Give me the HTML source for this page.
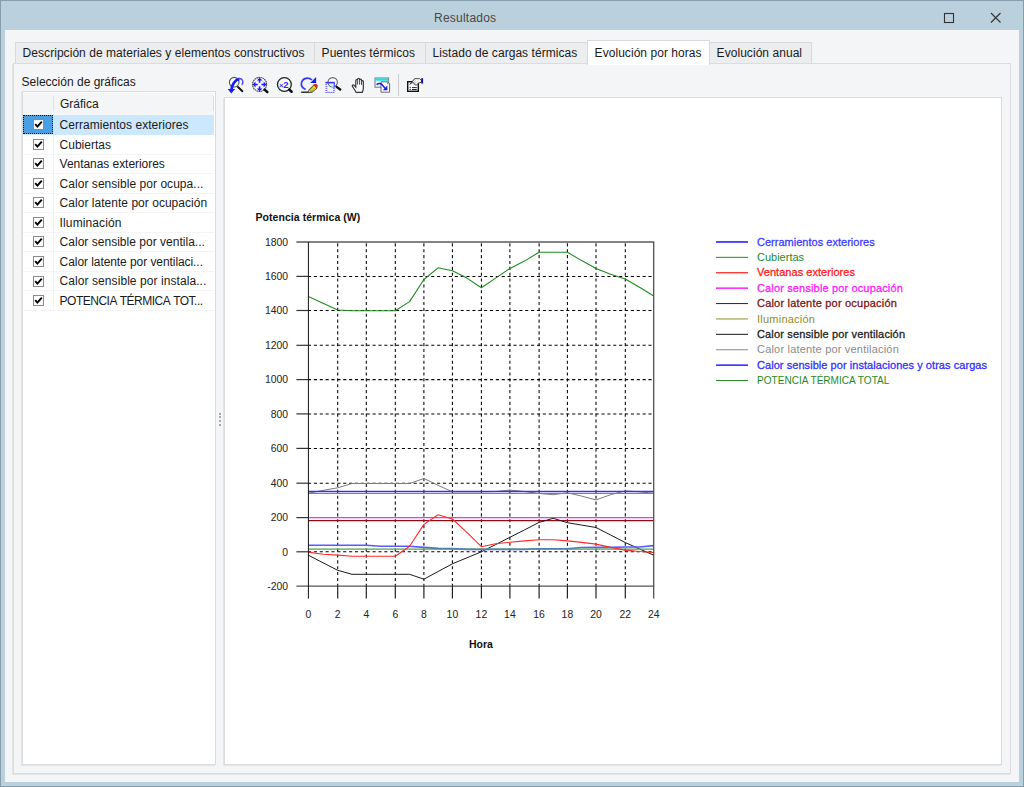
<!DOCTYPE html>
<html>
<head>
<meta charset="utf-8">
<title>Resultados</title>
<style>
html,body{margin:0;padding:0;}
body{width:1024px;height:787px;overflow:hidden;background:#bad0dd;font-family:"Liberation Sans",sans-serif;font-size:12px;color:#1a1a1a;position:relative;}
.abs{position:absolute;}
#frame{position:absolute;left:0;top:0;width:1022px;height:785px;border:1px solid #859dad;background:#bad0dd;}
#title{position:absolute;left:0;top:0;width:1024px;height:30px;line-height:33px;text-align:center;color:#333;font-size:12px;}
#title span{position:absolute;left:434px;top:1.5px;letter-spacing:0.23px;color:#484848;}
#content{position:absolute;left:5px;top:30px;width:1014px;height:752px;background:#f3f5f7;}
.tab{position:absolute;top:42px;height:21px;background:#ecedef;border:1px solid #d9d9d9;border-bottom:none;box-sizing:border-box;white-space:nowrap;}
.tab span{position:absolute;top:3px;left:6.6px;line-height:15px;letter-spacing:0.05px;}
.tab.act{top:40px;height:25px;background:#fff;z-index:3;}
.tab.act span{top:5px;}
#panel{position:absolute;left:13px;top:63px;width:996px;height:709px;border:1px solid #dcdcdc;box-sizing:content-box;background:#f3f5f7;box-shadow:-1px 1px 0 rgba(170,170,170,0.22);}
#list{position:absolute;left:22px;top:91px;width:192px;height:672px;border:1px solid #dcdcdc;background:#fff;box-shadow:-1px 1px 0 rgba(170,170,170,0.22);}
#lhead{position:absolute;left:23px;top:93px;width:191px;height:22px;background:#f3f5f7;}
#chart{position:absolute;left:224px;top:97px;width:776px;height:666px;border:1px solid #dcdcdc;background:#fff;box-shadow:-1px 1px 0 rgba(170,170,170,0.22);}
.row{position:absolute;left:23px;width:191px;height:19px;border-bottom:1px solid #f4f4f4;white-space:nowrap;}
.row.sel{background:#cce8ff;border-bottom-color:#cce8ff;}
.row .c0{position:absolute;left:0;top:0;width:31px;height:19px;box-sizing:border-box;border-right:1px solid #f2f2f2;}
.row.sel .c0{background:#4a9fe2;border:1px dotted #111;width:30px;}
.cb{position:absolute;left:33px;width:9px;height:9px;border:1px solid #8a8a8a;background:#fff;display:block;}
.cb svg{position:absolute;left:0;top:0;display:block;}
.tx{position:absolute;left:59.6px;line-height:15px;white-space:nowrap;}
.yl{position:absolute;left:240px;width:48px;text-align:right;font-size:10.4px;line-height:14px;color:#222;}
.xl{position:absolute;top:607.5px;width:30px;text-align:center;font-size:10.4px;line-height:14px;color:#222;}
.lg{position:absolute;left:757px;font-size:11.8px;line-height:15px;white-space:nowrap;}
.bold{font-weight:700;}
</style>
</head>
<body>
<div id="frame"></div>
<div id="title"><span>Resultados</span></div>
<!-- window buttons -->
<svg class="abs" style="left:940px;top:8px" width="70" height="20" viewBox="0 0 70 20">
  <rect x="4.5" y="5.5" width="9" height="9" fill="none" stroke="#333" stroke-width="1.1"/>
  <path d="M51 5 L60.5 14.5 M60.5 5 L51 14.5" stroke="#333" stroke-width="1.1" fill="none"/>
</svg>
<div id="content"></div>
<div id="panel"></div>
<div class="tab" style="left:15px;width:300px"><span>Descripción de materiales y elementos constructivos</span></div>
<div class="tab" style="left:314px;width:112px"><span>Puentes térmicos</span></div>
<div class="tab" style="left:425px;width:163px"><span>Listado de cargas térmicas</span></div>
<div class="tab act" style="left:587px;width:123px"><span>Evolución por horas</span></div>
<div class="tab" style="left:709px;width:103px"><span>Evolución anual</span></div>

<div class="abs" style="left:21.6px;top:74.8px;line-height:15px;white-space:nowrap;">Selección de gráficas</div>
<div id="list"></div>
<div id="lhead"><div class="abs" style="left:30px;top:3px;width:1px;height:15px;background:#e2e2e2"></div><div class="abs" style="left:37px;top:4.2px;line-height:15px;">Gráfica</div><div class="abs" style="left:190px;top:3px;width:1px;height:15px;background:#dcdcdc"></div></div>
<div class="row sel" style="top:115.00px"><span class="c0"></span></div>
<span class="cb" style="top:119px"><svg width="9" height="9" viewBox="0 0 9 9"><path d="M1.2 4.2 L3.4 6.6 L7.8 1.6" fill="none" stroke="#000" stroke-width="1.9"/></svg></span>
<span class="tx" style="top:118px;letter-spacing:0.04px;">Cerramientos exteriores</span>
<div class="row" style="top:134.56px"><span class="c0"></span></div>
<span class="cb" style="top:139px"><svg width="9" height="9" viewBox="0 0 9 9"><path d="M1.2 4.2 L3.4 6.6 L7.8 1.6" fill="none" stroke="#000" stroke-width="1.9"/></svg></span>
<span class="tx" style="top:138px;letter-spacing:0.00px;">Cubiertas</span>
<div class="row" style="top:154.12px"><span class="c0"></span></div>
<span class="cb" style="top:158px"><svg width="9" height="9" viewBox="0 0 9 9"><path d="M1.2 4.2 L3.4 6.6 L7.8 1.6" fill="none" stroke="#000" stroke-width="1.9"/></svg></span>
<span class="tx" style="top:157px;letter-spacing:-0.05px;">Ventanas exteriores</span>
<div class="row" style="top:173.68px"><span class="c0"></span></div>
<span class="cb" style="top:178px"><svg width="9" height="9" viewBox="0 0 9 9"><path d="M1.2 4.2 L3.4 6.6 L7.8 1.6" fill="none" stroke="#000" stroke-width="1.9"/></svg></span>
<span class="tx" style="top:177px;letter-spacing:0.04px;">Calor sensible por ocupa...</span>
<div class="row" style="top:193.24px"><span class="c0"></span></div>
<span class="cb" style="top:197px"><svg width="9" height="9" viewBox="0 0 9 9"><path d="M1.2 4.2 L3.4 6.6 L7.8 1.6" fill="none" stroke="#000" stroke-width="1.9"/></svg></span>
<span class="tx" style="top:196px;letter-spacing:0.03px;">Calor latente por ocupación</span>
<div class="row" style="top:212.80px"><span class="c0"></span></div>
<span class="cb" style="top:217px"><svg width="9" height="9" viewBox="0 0 9 9"><path d="M1.2 4.2 L3.4 6.6 L7.8 1.6" fill="none" stroke="#000" stroke-width="1.9"/></svg></span>
<span class="tx" style="top:216px;letter-spacing:0.12px;">Iluminación</span>
<div class="row" style="top:232.36px"><span class="c0"></span></div>
<span class="cb" style="top:236px"><svg width="9" height="9" viewBox="0 0 9 9"><path d="M1.2 4.2 L3.4 6.6 L7.8 1.6" fill="none" stroke="#000" stroke-width="1.9"/></svg></span>
<span class="tx" style="top:235px;letter-spacing:0.02px;">Calor sensible por ventila...</span>
<div class="row" style="top:251.92px"><span class="c0"></span></div>
<span class="cb" style="top:256px"><svg width="9" height="9" viewBox="0 0 9 9"><path d="M1.2 4.2 L3.4 6.6 L7.8 1.6" fill="none" stroke="#000" stroke-width="1.9"/></svg></span>
<span class="tx" style="top:255px;letter-spacing:-0.07px;">Calor latente por ventilaci...</span>
<div class="row" style="top:271.48px"><span class="c0"></span></div>
<span class="cb" style="top:276px"><svg width="9" height="9" viewBox="0 0 9 9"><path d="M1.2 4.2 L3.4 6.6 L7.8 1.6" fill="none" stroke="#000" stroke-width="1.9"/></svg></span>
<span class="tx" style="top:274px;letter-spacing:0.07px;">Calor sensible por instala...</span>
<div class="row" style="top:291.04px"><span class="c0"></span></div>
<span class="cb" style="top:295px"><svg width="9" height="9" viewBox="0 0 9 9"><path d="M1.2 4.2 L3.4 6.6 L7.8 1.6" fill="none" stroke="#000" stroke-width="1.9"/></svg></span>
<span class="tx" style="top:294px;letter-spacing:-0.50px;word-spacing:0.9px;">POTENCIA TÉRMICA TOT...</span>
<div id="chart"></div>

<!-- toolbar -->
<div id="toolbar">
<svg class="abs" style="left:0;top:0" width="1024" height="110" viewBox="0 0 1024 110">
<!-- icon1: zoom previous -->
<g>
 <circle cx="234.2" cy="82.2" r="4.8" fill="#fafafa" stroke="#555" stroke-width="1.1"/>
 <path d="M238 87 L242.4 91.2" stroke="#111" stroke-width="1.9" stroke-linecap="round"/>
 <path d="M231.5 89.6 C231.9 84.6 235 79.7 239.4 78.9" fill="none" stroke="#1a1aff" stroke-width="2.7"/>
 <path d="M238.6 78.6 C242.8 78.2 244 82.2 241.8 84.8" fill="none" stroke="#4a4aff" stroke-width="1.4"/>
 <path d="M227.7 89.1 L235.1 89.1 L231.3 93.4 Z" fill="#1a1aff"/>
</g>
<!-- icon2: zoom all -->
<g>
 <circle cx="259.6" cy="84.4" r="7" fill="#fafafa" stroke="#444" stroke-width="1.1" stroke-dasharray="1.6 0.5"/>
 <path d="M264.6 89.6 L267.3 92" stroke="#111" stroke-width="2.6" stroke-linecap="round"/>
 <path d="M259.6 77.7 L262.5 80.5 L256.7 80.5 Z M259.6 91.2 L262.5 88.4 L256.7 88.4 Z M252.7 84.5 L255.5 81.6 L255.5 87.4 Z M266.4 84.5 L263.6 81.6 L263.6 87.4 Z" fill="#1a1aff"/>
 <path d="M259.6 80 V82.7 M259.6 86.3 V89 M255 84.5 H257.8 M261.3 84.5 H264" stroke="#1a1aff" stroke-width="1.6"/>
</g>
<!-- icon3: zoom x2 -->
<g>
 <circle cx="284.4" cy="84.5" r="6.9" fill="#fafafa" stroke="#222" stroke-width="1.3"/>
 <path d="M289.2 89.6 L291.6 91.7" stroke="#111" stroke-width="2.6" stroke-linecap="round"/>
 <text x="279" y="88" font-family="Liberation Sans" font-size="7.5" font-weight="700" fill="#3a3aff">×</text>
 <text x="283.2" y="88.2" font-family="Liberation Sans" font-size="9.6" font-weight="700" fill="#2a2aff">2</text>
</g>
<!-- icon4: redraw -->
<g>
 <path d="M305.6 89.4 C302.6 88.2 300.8 85.4 301.6 82.4 C302.8 78 308.6 76.8 312 80" fill="none" stroke="#3a3aff" stroke-width="1.7"/>
 <path d="M316.1 77 L316.1 82.9 L310.2 82.9 Z" fill="#1a1aff"/>
 <path d="M301.2 92.2 H309.2" stroke="#111" stroke-width="1.3"/>
 <path d="M308.6 92.6 L309.2 89.6 L314 84.8 L317.2 88 L312.2 92.2 Z" fill="#f2e41a" stroke="#222" stroke-width="0.8"/>
 <path d="M314 84.8 L314.8 84.2 C316 83.4 318 85.2 317.4 86.6 L316.8 87.6 Z" fill="#ee2222" stroke="#b01515" stroke-width="0.5"/>
 <path d="M310.4 89.8 L314.4 85.9 M311.6 91 L315.6 87.1" stroke="#222" stroke-width="0.6" stroke-dasharray="0.9 0.7"/>
 <path d="M308.6 92.6 L309.2 89.6 L311.4 91.8 Z" fill="#eee" stroke="#333" stroke-width="0.5"/>
</g>
<!-- icon5: zoom window -->
<g>
 <circle cx="332.7" cy="82.3" r="4.7" fill="#fafafa" stroke="#666" stroke-width="1.1"/>
 <path d="M328.6 83 H334.4 V86.6 C332.4 87.2 329.6 86.4 328.6 83 Z" fill="#c8f4f6"/>
 <path d="M325.4 82.6 H334.8" fill="none" stroke="#3030ff" stroke-width="1.5"/>
 <path d="M334.3 82.6 V87.4" fill="none" stroke="#5a5aff" stroke-width="1.4"/>
 <path d="M325.4 84.3 H327.2 M325.4 86.4 H327.2 M325.4 88.4 H327.2 M325.4 90.5 H327.2 M333 88.4 H334.8 M333 90.5 H334.8" stroke="#5a5aff" stroke-width="0.9"/>
 <path d="M325.4 92.4 H334.8" stroke="#5a5aff" stroke-width="1" stroke-dasharray="1.4 0.5"/>
 <path d="M336.6 86.8 L340.2 89.5" stroke="#111" stroke-width="2.3" stroke-linecap="round"/>
</g>
<!-- icon6: pan hand -->
<g>
 <path d="M356.2 92.4 C355 90 353.6 88.2 352.4 86.4 C351.8 85.2 353.2 84.4 354.2 85.4 L355.8 87.2 V80.4 C355.8 79.2 357.6 79.2 357.6 80.4 V79.2 C357.6 77.9 359.6 77.9 359.6 79.2 V80 C359.6 78.8 361.5 78.8 361.5 80 V81.4 C361.5 80.4 363.3 80.4 363.3 81.6 V88.4 C363.3 90 362.6 91.2 362.2 92.4 Z" fill="#fff" stroke="#333" stroke-width="1.2"/>
 <path d="M357.6 80.4 V84.6 M359.6 80 V84.6 M361.5 81.4 V84.8" stroke="#333" stroke-width="0.9"/>
</g>
<!-- icon7: windows -->
<g>
 <rect x="375" y="78" width="13.6" height="9.2" fill="#f6f6f6" stroke="#777" stroke-width="1"/>
 <rect x="375.5" y="78.4" width="12.6" height="2.3" fill="#14e4e4"/>
 <path d="M381 81.8 H387.6 L389.6 83.6 V92.2 H381 Z" fill="#fff" stroke="#666" stroke-width="1"/>
 <path d="M387.4 81.8 V83.8 H389.6" fill="none" stroke="#777" stroke-width="0.7"/>
 <path d="M376.6 84.6 C379 82.6 381.4 83.4 383 85.8 L385.2 88.4" fill="none" stroke="#1a1aff" stroke-width="1.5"/>
 <path d="M387.4 85.6 L387.4 90.2 L382.8 90.2 Z" fill="#1a1aff"/>
</g>
<!-- separator -->
<rect x="398" y="74" width="1" height="22" fill="#cbcbcb"/>
<!-- icon8: properties -->
<g>
 <rect x="407.7" y="81.7" width="10.6" height="9.6" fill="#fdfdfd" stroke="#111" stroke-width="1.4"/>
 <path d="M409.6 87.6 H410.8 M412 87.6 H416.8 M409.6 89.5 H410.8 M412 89.5 H416.8" stroke="#111" stroke-width="0.9"/>
 <path d="M409.8 84.4 L414.6 78.7 L419.6 78.7 L421.4 80.2 V82.2 L418.4 83.2 L416 85.4 L412.6 82.2 Z" fill="#fff" stroke="#333" stroke-width="0.9"/>
 <path d="M411.6 82.6 L414.8 79.2 M412.8 83.6 L416 80.2 M414 84.6 L417 81.4" stroke="#333" stroke-width="0.7" stroke-dasharray="0.7 0.7"/>
 <rect x="421.2" y="78.2" width="1.9" height="5.4" fill="#1010a0"/>
</g>
</svg>

</div>

<!-- chart -->
<svg class="abs" style="left:0;top:0" width="1024" height="787" viewBox="0 0 1024 787">
<line x1="337.7" y1="243.3" x2="337.7" y2="586.1" stroke="#000" stroke-width="1.05" stroke-dasharray="3.1 2.77"/>
<line x1="366.3" y1="243.3" x2="366.3" y2="586.1" stroke="#000" stroke-width="1.05" stroke-dasharray="3.1 2.77"/>
<line x1="395.3" y1="243.3" x2="395.3" y2="586.1" stroke="#000" stroke-width="1.05" stroke-dasharray="3.1 2.77"/>
<line x1="423.9" y1="243.3" x2="423.9" y2="586.1" stroke="#000" stroke-width="1.05" stroke-dasharray="3.1 2.77"/>
<line x1="452.4" y1="243.3" x2="452.4" y2="586.1" stroke="#000" stroke-width="1.05" stroke-dasharray="3.1 2.77"/>
<line x1="481.4" y1="243.3" x2="481.4" y2="586.1" stroke="#000" stroke-width="1.05" stroke-dasharray="3.1 2.77"/>
<line x1="509.9" y1="243.3" x2="509.9" y2="586.1" stroke="#000" stroke-width="1.05" stroke-dasharray="3.1 2.77"/>
<line x1="539.1" y1="243.3" x2="539.1" y2="586.1" stroke="#000" stroke-width="1.05" stroke-dasharray="3.1 2.77"/>
<line x1="567.4" y1="243.3" x2="567.4" y2="586.1" stroke="#000" stroke-width="1.05" stroke-dasharray="3.1 2.77"/>
<line x1="596.0" y1="243.3" x2="596.0" y2="586.1" stroke="#000" stroke-width="1.05" stroke-dasharray="3.1 2.77"/>
<line x1="625.3" y1="243.3" x2="625.3" y2="586.1" stroke="#000" stroke-width="1.05" stroke-dasharray="3.1 2.77"/>
<line x1="308.0" y1="551.8" x2="653.7" y2="551.8" stroke="#000" stroke-width="1.05" stroke-dasharray="3.1 2.77"/>
<line x1="308.0" y1="483.2" x2="653.7" y2="483.2" stroke="#000" stroke-width="1.05" stroke-dasharray="3.1 2.77"/>
<line x1="308.0" y1="448.4" x2="653.7" y2="448.4" stroke="#000" stroke-width="1.05" stroke-dasharray="3.1 2.77"/>
<line x1="308.0" y1="413.9" x2="653.7" y2="413.9" stroke="#000" stroke-width="1.05" stroke-dasharray="3.1 2.77"/>
<line x1="308.0" y1="379.6" x2="653.7" y2="379.6" stroke="#000" stroke-width="1.05" stroke-dasharray="3.1 2.77"/>
<line x1="308.0" y1="345.3" x2="653.7" y2="345.3" stroke="#000" stroke-width="1.05" stroke-dasharray="3.1 2.77"/>
<line x1="308.0" y1="310.5" x2="653.7" y2="310.5" stroke="#000" stroke-width="1.05" stroke-dasharray="3.1 2.77"/>
<line x1="308.0" y1="276.4" x2="653.7" y2="276.4" stroke="#000" stroke-width="1.05" stroke-dasharray="3.1 2.77"/>
<polyline points="308.4,493.2 323.0,490.4 337.7,487.8 352.0,483.5 366.3,483.5 380.8,483.5 395.3,483.5 409.6,483.5 423.9,478.5 438.1,485.3 452.4,491.8 466.9,491.8 481.4,491.8 495.6,491.5 509.9,490.1 524.5,491.5 539.1,493.5 553.2,494.7 567.4,492.8 581.7,496.1 596.0,499.9 610.6,494.7 625.3,490.9 639.5,491.8 653.7,493.3" fill="none" stroke="#7c7c7c" stroke-width="1.0" stroke-linejoin="round"/>
<polyline points="308.4,493.5 323.0,493.5 337.7,493.5 352.0,493.5 366.3,493.5 380.8,493.5 395.3,493.5 409.6,493.5 423.9,493.5 438.1,493.5 452.4,493.5 466.9,493.5 481.4,493.5 495.6,493.5 509.9,493.5 524.5,493.5 539.1,493.5 553.2,493.5 567.4,493.5 581.7,493.5 596.0,493.5 610.6,493.5 625.3,493.5 639.5,493.5 653.7,493.5" fill="none" stroke="#8f8f2a" stroke-width="1.1" stroke-linejoin="round"/>
<polyline points="308.4,491.5 323.0,491.5 337.7,491.5 352.0,491.5 366.3,491.5 380.8,491.5 395.3,491.5 409.6,491.5 423.9,491.5 438.1,491.5 452.4,491.5 466.9,491.5 481.4,491.5 495.6,491.5 509.9,491.5 524.5,491.5 539.1,491.5 553.2,491.5 567.4,491.5 581.7,491.5 596.0,491.5 610.6,491.5 625.3,491.5 639.5,491.5 653.7,491.5" fill="none" stroke="#3232ff" stroke-width="1.35" stroke-linejoin="round"/>
<polyline points="308.4,520.7 323.0,520.7 337.7,520.7 352.0,520.7 366.3,520.7 380.8,520.7 395.3,520.7 409.6,520.7 423.9,520.7 438.1,520.7 452.4,520.7 466.9,520.7 481.4,520.7 495.6,520.7 509.9,520.7 524.5,520.7 539.1,520.7 553.2,520.7 567.4,520.7 581.7,520.7 596.0,520.7 610.6,520.7 625.3,520.7 639.5,520.7 653.7,520.7" fill="none" stroke="#8a0f0f" stroke-width="1.3" stroke-linejoin="round"/>
<polyline points="308.4,517.6 323.0,517.6 337.7,517.6 352.0,517.6 366.3,517.6 380.8,517.6 395.3,517.6 409.6,517.6 423.9,517.6 438.1,517.6 452.4,517.6 466.9,517.6 481.4,517.6 495.6,517.6 509.9,517.6 524.5,517.6 539.1,517.6 553.2,517.6 567.4,517.6 581.7,517.6 596.0,517.6 610.6,517.6 625.3,517.6 639.5,517.6 653.7,517.6" fill="none" stroke="#ff28ff" stroke-width="1.3" stroke-linejoin="round"/>
<polyline points="308.4,555.2 323.0,562.8 337.7,570.3 352.0,574.3 366.3,574.3 380.8,574.3 395.3,574.3 409.6,574.3 423.9,579.2 438.1,571.5 452.4,563.8 466.9,557.8 481.4,551.8 495.6,544.6 509.9,537.3 524.5,529.9 539.1,522.4 553.2,518.3 567.4,522.7 581.7,525.1 596.0,527.5 610.6,535.0 625.3,542.6 639.5,548.9 653.7,555.2" fill="none" stroke="#1a1a1a" stroke-width="1.0" stroke-linejoin="round"/>
<polyline points="308.4,545.3 323.0,545.3 337.7,545.3 352.0,545.3 366.3,545.3 380.8,546.2 395.3,546.3 409.6,546.3 423.9,547.4 438.1,548.4 452.4,548.6 466.9,549.4 481.4,549.4 495.6,549.4 509.9,549.4 524.5,549.4 539.1,548.7 553.2,548.7 567.4,548.7 581.7,547.5 596.0,547.4 610.6,547.4 625.3,547.0 639.5,547.0 653.7,545.6" fill="none" stroke="#5a5aff" stroke-width="1.6" stroke-linejoin="round"/>
<polyline points="308.4,549.2 323.0,549.2 337.7,549.2 352.0,549.2 366.3,549.2 380.8,549.2 395.3,549.2 409.6,549.2 423.9,549.2 438.1,549.2 452.4,549.2 466.9,549.2 481.4,549.2 495.6,549.2 509.9,549.2 524.5,549.2 539.1,549.2 553.2,549.2 567.4,549.2 581.7,549.2 596.0,549.2 610.6,549.2 625.3,549.2 639.5,549.2 653.7,549.2" fill="none" stroke="#4ea34e" stroke-width="1.2" stroke-linejoin="round"/>
<polyline points="308.4,552.1 323.0,554.2 337.7,555.1 352.0,556.3 366.3,556.3 380.8,556.3 395.3,556.3 409.6,546.3 423.9,524.4 438.1,514.8 452.4,519.0 466.9,532.3 481.4,546.7 495.6,543.8 509.9,542.2 524.5,540.9 539.1,539.7 553.2,539.7 567.4,540.9 581.7,542.4 596.0,544.1 610.6,547.4 625.3,550.1 639.5,551.5 653.7,552.5" fill="none" stroke="#ff2a2a" stroke-width="1.1" stroke-linejoin="round"/>
<polyline points="308.4,296.5 323.0,303.3 337.7,310.0 352.0,310.7 366.3,310.7 380.8,310.7 395.3,310.7 409.6,301.6 423.9,279.5 438.1,267.8 452.4,270.7 466.9,278.1 481.4,287.8 495.6,278.1 509.9,268.5 524.5,261.1 539.1,252.2 553.2,252.2 567.4,252.2 581.7,260.6 596.0,268.5 610.6,274.2 625.3,279.1 639.5,287.3 653.7,296.0" fill="none" stroke="#1e8c1e" stroke-width="1.1" stroke-linejoin="round"/>
<line x1="296.4" y1="242.0" x2="654.2" y2="242.0" stroke="#5a5a5a" stroke-width="1.5"/>
<line x1="296.4" y1="586.1" x2="654.2" y2="586.1" stroke="#555" stroke-width="1.3"/>
<line x1="308.4" y1="242.1" x2="308.4" y2="598.6" stroke="#111" stroke-width="1"/>
<line x1="653.7" y1="242.1" x2="653.7" y2="598.6" stroke="#444" stroke-width="1.2"/>
<line x1="296.4" y1="551.8" x2="308.4" y2="551.8" stroke="#333" stroke-width="1.2"/>
<line x1="296.4" y1="517.6" x2="308.4" y2="517.6" stroke="#333" stroke-width="1.2"/>
<line x1="296.4" y1="483.2" x2="308.4" y2="483.2" stroke="#333" stroke-width="1.2"/>
<line x1="296.4" y1="448.4" x2="308.4" y2="448.4" stroke="#333" stroke-width="1.2"/>
<line x1="296.4" y1="413.9" x2="308.4" y2="413.9" stroke="#333" stroke-width="1.2"/>
<line x1="296.4" y1="379.6" x2="308.4" y2="379.6" stroke="#333" stroke-width="1.2"/>
<line x1="296.4" y1="345.3" x2="308.4" y2="345.3" stroke="#333" stroke-width="1.2"/>
<line x1="296.4" y1="310.5" x2="308.4" y2="310.5" stroke="#333" stroke-width="1.2"/>
<line x1="296.4" y1="276.4" x2="308.4" y2="276.4" stroke="#333" stroke-width="1.2"/>
<line x1="337.7" y1="586.1" x2="337.7" y2="598.6" stroke="#222" stroke-width="1.2"/>
<line x1="366.3" y1="586.1" x2="366.3" y2="598.6" stroke="#222" stroke-width="1.2"/>
<line x1="395.3" y1="586.1" x2="395.3" y2="598.6" stroke="#222" stroke-width="1.2"/>
<line x1="423.9" y1="586.1" x2="423.9" y2="598.6" stroke="#222" stroke-width="1.2"/>
<line x1="452.4" y1="586.1" x2="452.4" y2="598.6" stroke="#222" stroke-width="1.2"/>
<line x1="481.4" y1="586.1" x2="481.4" y2="598.6" stroke="#222" stroke-width="1.2"/>
<line x1="509.9" y1="586.1" x2="509.9" y2="598.6" stroke="#222" stroke-width="1.2"/>
<line x1="539.1" y1="586.1" x2="539.1" y2="598.6" stroke="#222" stroke-width="1.2"/>
<line x1="567.4" y1="586.1" x2="567.4" y2="598.6" stroke="#222" stroke-width="1.2"/>
<line x1="596.0" y1="586.1" x2="596.0" y2="598.6" stroke="#222" stroke-width="1.2"/>
<line x1="625.3" y1="586.1" x2="625.3" y2="598.6" stroke="#222" stroke-width="1.2"/>
<line x1="716" y1="241.95" x2="748" y2="241.95" stroke="#3c3cff" stroke-width="1.8"/>
<line x1="716" y1="257.35" x2="748" y2="257.35" stroke="#1f8a1f" stroke-width="1.0"/>
<line x1="716" y1="272.75" x2="748" y2="272.75" stroke="#ff2020" stroke-width="1.25"/>
<line x1="716" y1="288.15" x2="748" y2="288.15" stroke="#ff20ff" stroke-width="1.5"/>
<line x1="716" y1="303.55" x2="748" y2="303.55" stroke="#7a1414" stroke-width="1.05"/>
<line x1="716" y1="318.95" x2="748" y2="318.95" stroke="#8c8c28" stroke-width="1.0"/>
<line x1="716" y1="334.35" x2="748" y2="334.35" stroke="#202020" stroke-width="1.05"/>
<line x1="716" y1="349.75" x2="748" y2="349.75" stroke="#8a8a8a" stroke-width="1.0"/>
<line x1="716" y1="365.15" x2="748" y2="365.15" stroke="#3030ff" stroke-width="1.6"/>
<line x1="716" y1="380.55" x2="748" y2="380.55" stroke="#1f8a1f" stroke-width="1.0"/>
</svg>
<div class="abs bold" style="left:255.5px;top:210px;font-size:10.5px;line-height:14px;color:#111;white-space:nowrap;letter-spacing:0.05px;">Potencia térmica (W)</div>
<div class="abs bold" style="left:451px;top:637px;width:60px;text-align:center;font-size:10.5px;line-height:14px;color:#111;">Hora</div>
<div class="yl" style="top:579.9px">-200</div>
<div class="yl" style="top:545.6px">0</div>
<div class="yl" style="top:511.4px">200</div>
<div class="yl" style="top:477.0px">400</div>
<div class="yl" style="top:442.2px">600</div>
<div class="yl" style="top:407.7px">800</div>
<div class="yl" style="top:373.4px">1000</div>
<div class="yl" style="top:339.1px">1200</div>
<div class="yl" style="top:304.3px">1400</div>
<div class="yl" style="top:270.2px">1600</div>
<div class="yl" style="top:235.9px">1800</div>
<div class="xl" style="left:293.4px">0</div>
<div class="xl" style="left:322.7px">2</div>
<div class="xl" style="left:351.3px">4</div>
<div class="xl" style="left:380.3px">6</div>
<div class="xl" style="left:408.9px">8</div>
<div class="xl" style="left:437.4px">10</div>
<div class="xl" style="left:466.4px">12</div>
<div class="xl" style="left:494.9px">14</div>
<div class="xl" style="left:524.1px">16</div>
<div class="xl" style="left:552.4px">18</div>
<div class="xl" style="left:581.0px">20</div>
<div class="xl" style="left:610.3px">22</div>
<div class="xl" style="left:638.7px">24</div>
<div class="lg" style="top:234.5px;color:#3c3cff;letter-spacing:0.018px;transform:scaleX(0.9322);transform-origin:0 0;-webkit-text-stroke:0.3px #3c3cff;">Cerramientos exteriores</div>
<div class="lg" style="top:249.9px;color:#1f8a1f;letter-spacing:0.000px;transform:scaleX(0.9322);transform-origin:0 0;">Cubiertas</div>
<div class="lg" style="top:265.4px;color:#ff2020;letter-spacing:0.043px;transform:scaleX(0.9322);transform-origin:0 0;-webkit-text-stroke:0.3px #ff2020;">Ventanas exteriores</div>
<div class="lg" style="top:280.8px;color:#ff20ff;letter-spacing:0.157px;transform:scaleX(0.9322);transform-origin:0 0;-webkit-text-stroke:0.3px #ff20ff;">Calor sensible por ocupación</div>
<div class="lg" style="top:296.2px;color:#7a1414;letter-spacing:0.220px;transform:scaleX(0.9322);transform-origin:0 0;-webkit-text-stroke:0.3px #7a1414;">Calor latente por ocupación</div>
<div class="lg" style="top:311.6px;color:#8c8c28;letter-spacing:0.252px;transform:scaleX(0.9322);transform-origin:0 0;">Iluminación</div>
<div class="lg" style="top:327.0px;color:#202020;letter-spacing:0.161px;transform:scaleX(0.9322);transform-origin:0 0;-webkit-text-stroke:0.3px #202020;">Calor sensible por ventilación</div>
<div class="lg" style="top:342.4px;color:#8a8a8a;letter-spacing:0.209px;transform:scaleX(0.9322);transform-origin:0 0;">Calor latente por ventilación</div>
<div class="lg" style="top:357.8px;color:#3030ff;letter-spacing:0.061px;transform:scaleX(0.9322);transform-origin:0 0;-webkit-text-stroke:0.3px #3030ff;">Calor sensible por instalaciones y otras cargas</div>
<div class="lg" style="top:373.1px;color:#1f8a1f;letter-spacing:0.000px;transform:scaleX(0.8530);transform-origin:0 0;">POTENCIA TÉRMICA TOTAL</div>
<!-- splitter grip -->
<div class="abs" style="left:219px;top:412.5px;width:2px;height:2px;background:#a9a9a9"></div>
<div class="abs" style="left:219px;top:416.4px;width:2px;height:2px;background:#a9a9a9"></div>
<div class="abs" style="left:219px;top:420.3px;width:2px;height:2px;background:#a9a9a9"></div>
<div class="abs" style="left:219px;top:424.2px;width:2px;height:2px;background:#a9a9a9"></div>
</body>
</html>
